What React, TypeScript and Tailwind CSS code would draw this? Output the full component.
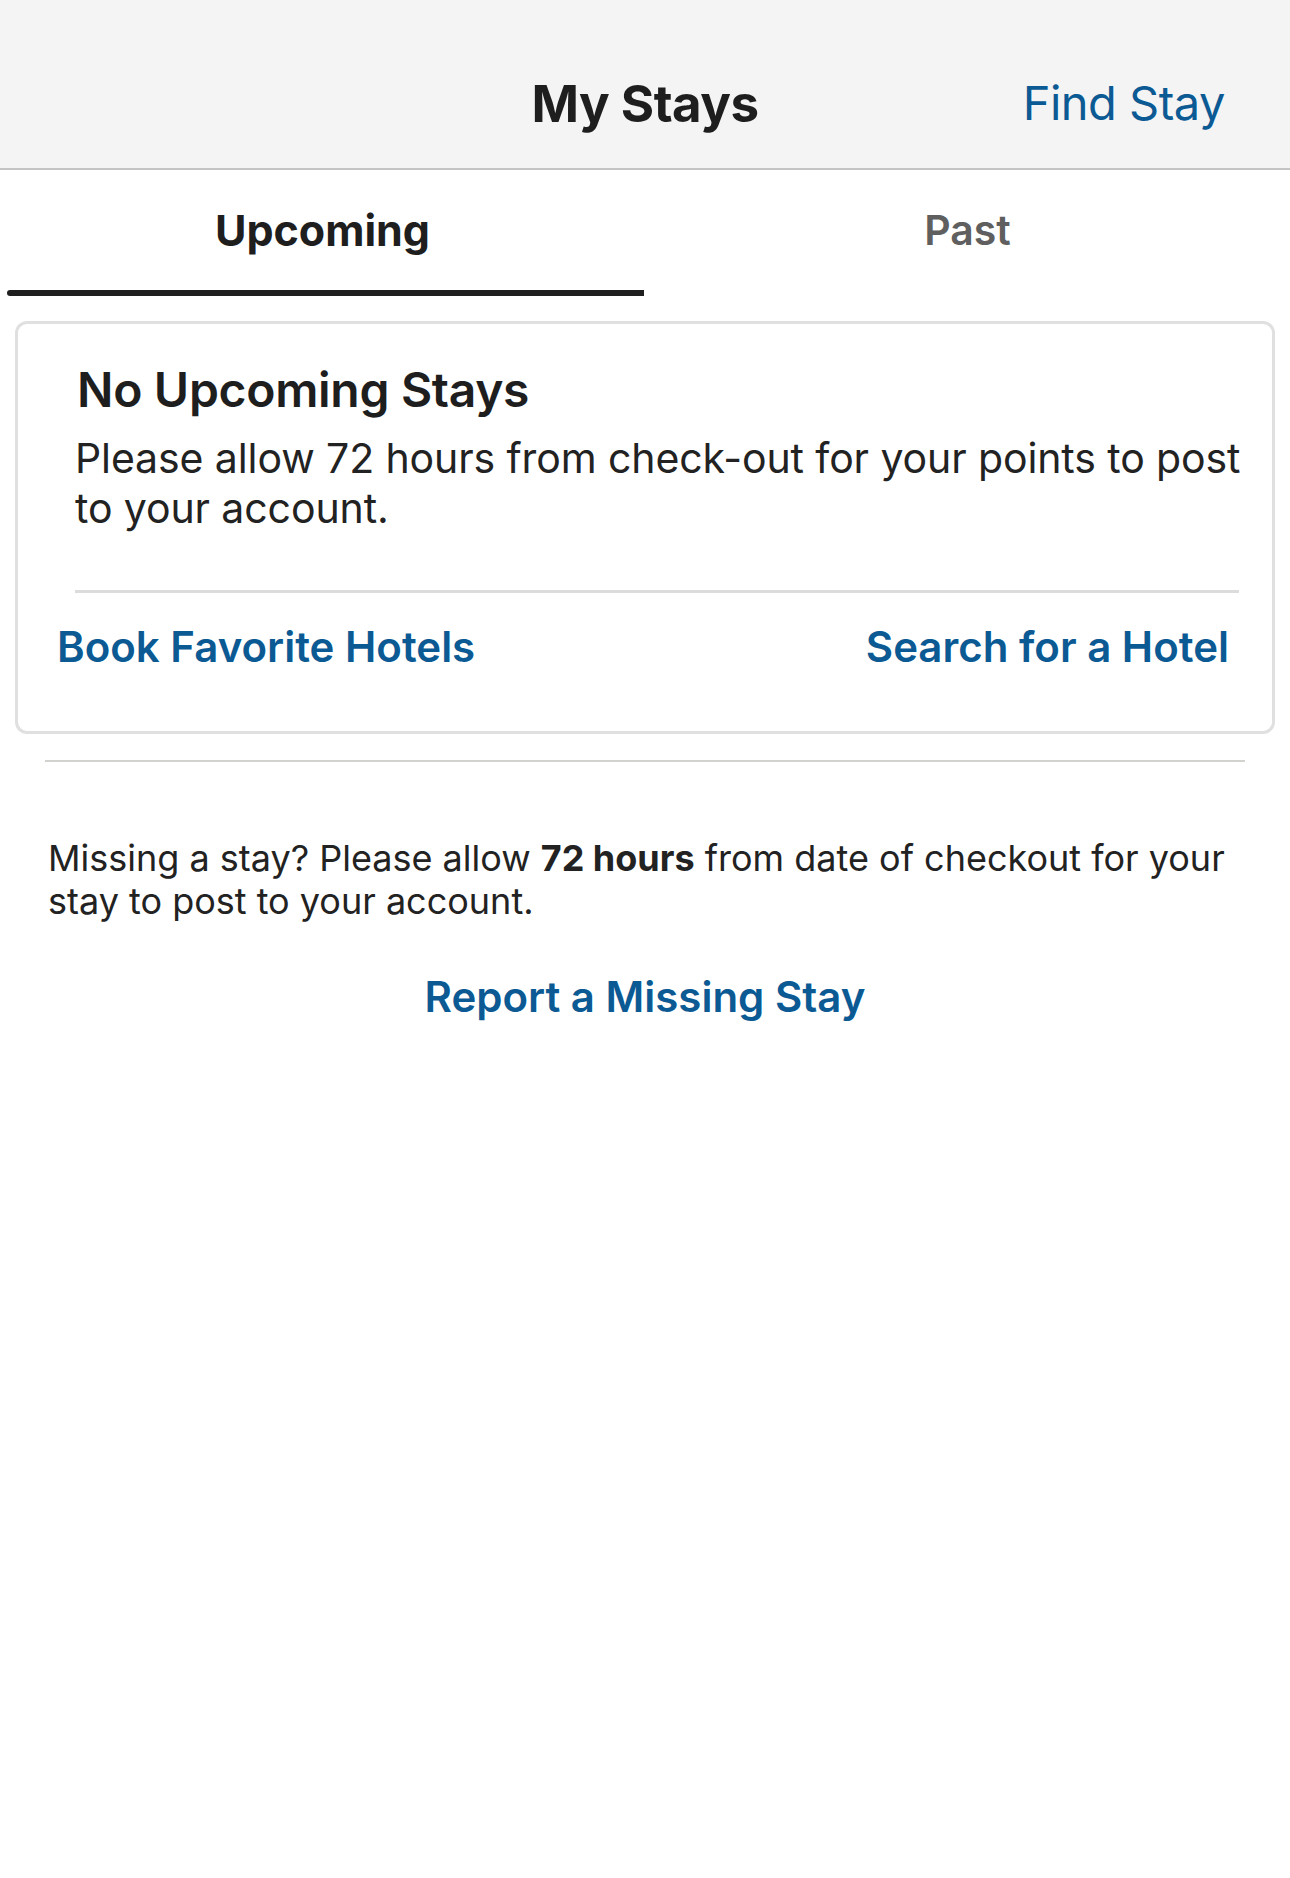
export default function App() {
  return (
    <div
      className="min-h-[1878px] w-[1290px] bg-white text-[#222222]"
      style={{ fontFamily: "Inter, 'Noto Sans', sans-serif" }}
    >
      {/* Nav bar */}
      <header className="relative flex h-[170px] items-end justify-center border-b-2 border-[#c4c4c4] bg-[#f4f4f4] pb-[34px]">
        <h1 className="text-[51px] font-bold leading-[60px] tracking-[-0.5px] text-[#1e1e1e]">My Stays</h1>
        <button className="absolute bottom-[35px] right-[65px] text-[47px] leading-[60px] tracking-[-0.5px] text-[#0c5a94]">
          Find Stay
        </button>
      </header>

      {/* Tabs */}
      <div className="flex h-[126px]">
        <div className="flex flex-1 flex-col items-center">
          <span className="mt-[30px] text-[43px] font-bold leading-[60px] text-[#1e1e1e]">Upcoming</span>
          <div className="mt-auto ml-[7px] h-[6px] w-[637px] self-start rounded-l-[6px] bg-[#1f1f1f]" />
        </div>
        <div className="flex flex-1 flex-col items-center">
          <span className="mt-[30px] text-[41px] font-semibold leading-[60px] text-[#5f5f5f]">Past</span>
        </div>
      </div>

      {/* Empty state card */}
      <section className="mx-[15px] mt-[25px] rounded-[12px] border-[3px] border-[#e0e0e0] pt-[38px] pb-[59px]">
        <div className="pl-[57px] pr-[33px]">
          <h2 className="pl-[2px] text-[48px] font-semibold leading-[56px] tracking-[-0.3px] text-[#1e1e1e]">
            No Upcoming Stays
          </h2>
          <p className="mt-[15px] mr-[-12px] text-[41px] tracking-[-0.1px] leading-[50px] text-[#222222]">
            Please allow 72 hours from check-out for your points to post to your account.
          </p>
          <div className="mt-[57px] h-[3px] bg-[#dcdcdc]" />
        </div>
        <div className="mt-[29px] flex justify-between pl-[39px] pr-[43px]">
          <a className="text-[42px] font-semibold leading-[50px] text-[#0c5a94]">Book Favorite Hotels</a>
          <a className="text-[42px] font-semibold leading-[50px] text-[#0c5a94]">Search for a Hotel</a>
        </div>
      </section>

      {/* Missing stay info */}
      <div className="mx-[45px] mt-[26px] h-[2px] bg-[#d2d2ce]" />
      <p className="mx-[45px] mt-[75px] pl-[3px] text-[36px] leading-[43px] text-[#222222]">
        Missing a stay? Please allow <b className="font-bold">72 hours</b> from date of checkout for your stay to post to your account.
      </p>
      <div className="mt-[49px] flex justify-center">
        <a className="text-[42px] font-semibold leading-[50px] text-[#0c5a94]">Report a Missing Stay</a>
      </div>
    </div>
  );
}
